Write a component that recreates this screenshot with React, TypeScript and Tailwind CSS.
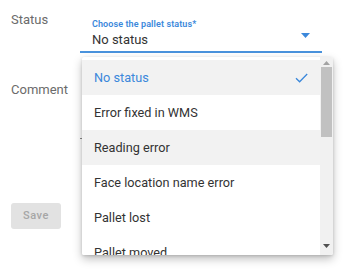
import React from "react";

const items = [
  "No status",
  "Error fixed in WMS",
  "Reading error",
  "Face location name error",
  "Pallet lost",
  "Pallet moved",
];

export default function App() {
  return (
    <div
      className="relative w-[348px] h-[271px] bg-white overflow-hidden"
      style={{ fontFamily: "Roboto, 'Liberation Sans', Arial, sans-serif" }}
    >
      <div className="flex flex-col">
        {/* Status row */}
        <div className="flex h-[60px]">
          <div className="w-[80px] pl-[11px] pt-[11px] text-[13px] leading-[18px] text-[#6b6b6b]">
            Status
          </div>
          <div className="w-[242px] flex flex-col">
            <div className="pl-[12px] pt-[19px] text-[9px] leading-[11px] font-semibold text-[#3b88db] tracking-[0.1px]">
              Choose the pallet status*
            </div>
            <div className="flex items-center justify-between pl-[12px] pr-[12px] h-[19px]">
              <span className="text-[13px] text-[#333333]">No status</span>
              <svg width="9" height="5" viewBox="0 0 9 5" className="-mt-[9px]">
                <path d="M0 0 L9 0 L4.5 5 Z" fill="#3b88db" />
              </svg>
            </div>
            <div className="mt-[2px] h-[2px] bg-[#4a93dd]" />
          </div>
        </div>
        {/* Comment row */}
        <div className="flex h-[80px]">
          <div className="w-[80px] pl-[11px] pt-[21px] text-[13px] leading-[18px] text-[#6b6b6b]">
            Comment
          </div>
          <div className="w-[242px] flex flex-col">
            <div className="mt-[78px] h-[1px] bg-[#8a8a8a]" />
          </div>
        </div>
        {/* Save */}
        <div className="pl-[11px] pt-[63px]">
          <div className="w-[50px] h-[26px] rounded-[3px] bg-[#e2e2e2] flex items-center justify-center text-[11px] font-medium tracking-[0.6px] text-[#a6a6a6]">
            Save
          </div>
        </div>
      </div>

      {/* Dropdown menu overlay */}
      <div className="absolute left-[82px] top-[57px] w-[251px] h-[198px] bg-white rounded-[2px] shadow-[0_4px_10px_rgba(0,0,0,0.25),0_1px_3px_rgba(0,0,0,0.15)] flex overflow-hidden">
        <div className="flex-1 flex flex-col pt-[3px]">
          {items.map((it, i) => (
            <div
              key={it}
              className={
                "shrink-0 h-[35px] flex items-center justify-between pl-[12px] pr-[12px] text-[12.7px] " +
                (i === 0
                  ? "bg-[#f2f2f2] text-[#3b88db]"
                  : i === 2
                  ? "bg-[#f2f2f2] text-[#333333]"
                  : "bg-white text-[#333333]")
              }
            >
              <span>{it}</span>
              {i === 0 && (
                <svg width="13" height="10" viewBox="0 0 13 10">
                  <path d="M1 5.2 L4.6 8.8 L12.2 1" fill="none" stroke="#3b88db" strokeWidth="1.3" />
                </svg>
              )}
            </div>
          ))}
        </div>
        {/* scrollbar */}
        <div className="w-[13px] bg-[#f1f1f1] flex flex-col items-center">
          <div className="h-[9px] flex items-center justify-center pt-[2px]">
            <svg width="7" height="4" viewBox="0 0 7 4">
              <path d="M0 4 L7 4 L3.5 0 Z" fill="#a3a3a3" />
            </svg>
          </div>
          <div className="mt-[1px] w-[11px] h-[70px] bg-[#c1c1c1]" />
          <div className="flex-1" />
          <div className="h-[14px] flex items-start justify-center pt-[3px]">
            <svg width="7" height="4" viewBox="0 0 7 4">
              <path d="M0 0 L7 0 L3.5 4 Z" fill="#505050" />
            </svg>
          </div>
        </div>
      </div>
    </div>
  );
}
